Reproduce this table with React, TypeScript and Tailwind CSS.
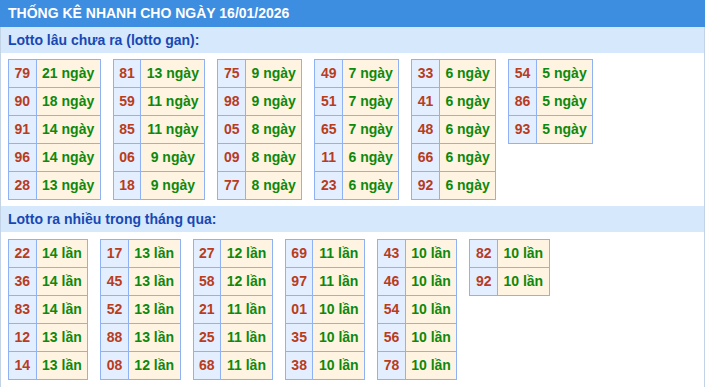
import React from 'react'

type Row = [string, string]

const ganTables: Row[][] = [
  [['79', '21 ngày'], ['90', '18 ngày'], ['91', '14 ngày'], ['96', '14 ngày'], ['28', '13 ngày']],
  [['81', '13 ngày'], ['59', '11 ngày'], ['85', '11 ngày'], ['06', '9 ngày'], ['18', '9 ngày']],
  [['75', '9 ngày'], ['98', '9 ngày'], ['05', '8 ngày'], ['09', '8 ngày'], ['77', '8 ngày']],
  [['49', '7 ngày'], ['51', '7 ngày'], ['65', '7 ngày'], ['11', '6 ngày'], ['23', '6 ngày']],
  [['33', '6 ngày'], ['41', '6 ngày'], ['48', '6 ngày'], ['66', '6 ngày'], ['92', '6 ngày']],
  [['54', '5 ngày'], ['86', '5 ngày'], ['93', '5 ngày']]
]

const hotTables: Row[][] = [
  [['22', '14 lần'], ['36', '14 lần'], ['83', '14 lần'], ['12', '13 lần'], ['14', '13 lần']],
  [['17', '13 lần'], ['45', '13 lần'], ['52', '13 lần'], ['88', '13 lần'], ['08', '12 lần']],
  [['27', '12 lần'], ['58', '12 lần'], ['21', '11 lần'], ['25', '11 lần'], ['68', '11 lần']],
  [['69', '11 lần'], ['97', '11 lần'], ['01', '10 lần'], ['35', '10 lần'], ['38', '10 lần']],
  [['43', '10 lần'], ['46', '10 lần'], ['54', '10 lần'], ['56', '10 lần'], ['78', '10 lần']],
  [['82', '10 lần'], ['92', '10 lần']]
]

const StatTable: React.FC<{ rows: Row[] }> = ({ rows }) => (
  <table className="border-collapse self-start">
    <tbody>
      {rows.map(([num, count]) => (
        <tr key={num}>
          <td className="border border-[#8fb2f5] bg-[#e3effe] px-[5.5px] py-[5px] text-center leading-[17px] text-[#b83c1e]">
            {num}
          </td>
          <td className="border border-[#8fb2f5] bg-[#fff4e1] px-[5.5px] py-[5px] text-center leading-[17px] text-[#0d890d]">
            {count}
          </td>
        </tr>
      ))}
    </tbody>
  </table>
)

const SectionTitle: React.FC<{ title: string }> = ({ title }) => (
  <div className="flex h-[26px] items-center bg-[#d6e8fb] px-[7px] text-[14px] font-bold text-[#1848b4]">
    {title}
  </div>
)

export default function App() {
  return (
    <div className="w-[705px] bg-white font-['Liberation_Sans',Arial,sans-serif] text-[14px] font-bold">
      <div className="flex h-[27px] items-center bg-[#3d8ee1] px-[8px] text-[14px] font-bold text-white">
        THỐNG KÊ NHANH CHO NGÀY 16/01/2026
      </div>
      <div className="border-x border-[#c3d3e6]">
        <SectionTitle title="Lotto lâu chưa ra (lotto gan):" />
        <div className="flex flex-wrap gap-x-[12px] px-[7px] py-[6px]">
          {ganTables.map((rows, i) => (
            <StatTable key={i} rows={rows} />
          ))}
        </div>
        <SectionTitle title="Lotto ra nhiều trong tháng qua:" />
        <div className="flex flex-wrap gap-x-[12px] px-[7px] py-[7px]">
          {hotTables.map((rows, i) => (
            <StatTable key={i} rows={rows} />
          ))}
        </div>
      </div>
    </div>
  )
}
